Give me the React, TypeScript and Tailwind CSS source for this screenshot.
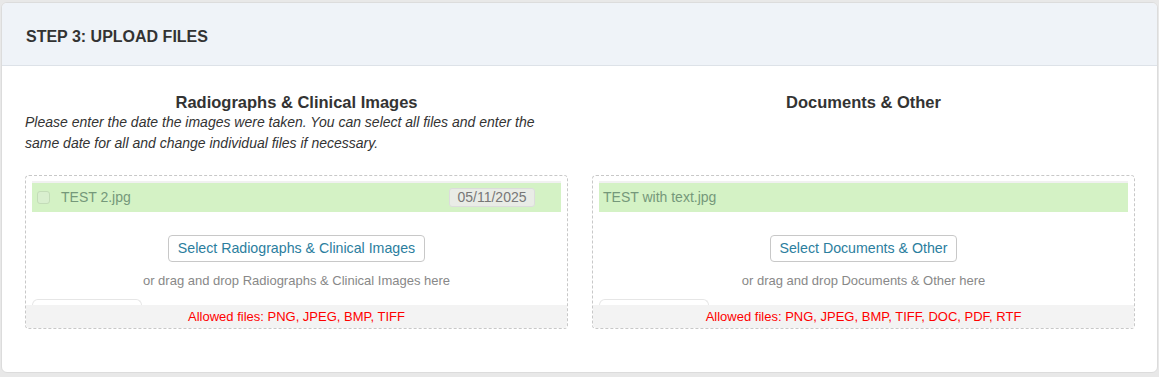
import React from 'react';

type Column = {
    title: string;
    note?: string;
    fileName: string;
    date?: string;
    buttonLabel: string;
    dropLabel: string;
    allowed: string;
};

const columns: Column[] = [
    {
        title: 'Radiographs & Clinical Images',
        note: 'Please enter the date the images were taken. You can select all files and enter the same date for all and change individual files if necessary.',
        fileName: 'TEST 2.jpg',
        date: '05/11/2025',
        buttonLabel: 'Select Radiographs & Clinical Images',
        dropLabel: 'or drag and drop Radiographs & Clinical Images here',
        allowed: 'Allowed files: PNG, JPEG, BMP, TIFF',
    },
    {
        title: 'Documents & Other',
        fileName: 'TEST with text.jpg',
        buttonLabel: 'Select Documents & Other',
        dropLabel: 'or drag and drop Documents & Other here',
        allowed: 'Allowed files: PNG, JPEG, BMP, TIFF, DOC, PDF, RTF',
    },
];

function UploadColumn({ col }: { col: Column }) {
    return (
        <div className="flex flex-col">
            <h3 className="text-center text-[16.5px] leading-5 font-bold text-[#333]">{col.title}</h3>
            <p className="min-h-[42px] text-[14px] leading-[21px] italic text-[#333]">{col.note}</p>

            {/* Drop zone */}
            <div className="mt-[21px] flex flex-col rounded-[4px] border border-dashed border-[#c8c8c8]">
                <div className="mx-[6px] mt-[5px] bg-[#f1f1f1] pt-[2px]">
                    <div className={`flex h-[29px] items-center bg-[#d4f2c5] ${col.date ? 'pl-[5px] pr-[26px]' : 'pl-[4px]'}`}>
                        {col.date && (
                            <span className="mr-[11px] h-[13px] w-[13px] rounded-[3px] border border-[#c3dcb8] bg-[#d9efcf]" />
                        )}
                        <span className="text-[14px] text-[#75987a]">{col.fileName}</span>
                        {col.date && (
                            <span className="ml-auto flex h-[19px] w-[86px] items-center justify-center rounded-[3px] border border-[#dcdcdc] bg-[#e9ece6] text-[14px] text-[#777]">
                                {col.date}
                            </span>
                        )}
                    </div>
                </div>

                <div className="mt-[23px] flex justify-center">
                    <button className="h-[27px] rounded-[4px] border border-[#c8c8c8] bg-white px-[9px] text-[14.2px] text-[#2b7e9e]">
                        {col.buttonLabel}
                    </button>
                </div>
                <p className="mt-[11px] text-center text-[13px] leading-4 text-[#888]">{col.dropLabel}</p>

                <div className="ml-[6px] mt-[10px] h-[6px] w-[110px] rounded-t-[6px] border border-b-0 border-[#e6e6e6] bg-white" />
                <div className="flex h-[23px] items-center justify-center rounded-b-[4px] bg-[#f3f3f3] text-[13px] text-[#ff0000]">
                    {col.allowed}
                </div>
            </div>
        </div>
    );
}

export default function App() {
    return (
        <div className="h-[377px] bg-[#e8e8e8] px-[1px] pt-[2px] font-['Liberation_Sans',Arial,sans-serif]">
            <div className="h-[371px] overflow-hidden rounded-[6px] border border-[#dcdcdc] bg-white">
                <div className="flex h-[63px] items-center border-b border-[#dde2e8] bg-[#eff3f8] px-6 pt-[6px]">
                    <h2 className="text-[16px] font-bold text-[#333]">STEP 3: UPLOAD FILES</h2>
                </div>

                <div className="grid grid-cols-2 gap-6 pl-[23px] pr-[22px] pt-[26px]">
                    {columns.map((col) => (
                        <UploadColumn key={col.title} col={col} />
                    ))}
                </div>
            </div>
        </div>
    );
}
